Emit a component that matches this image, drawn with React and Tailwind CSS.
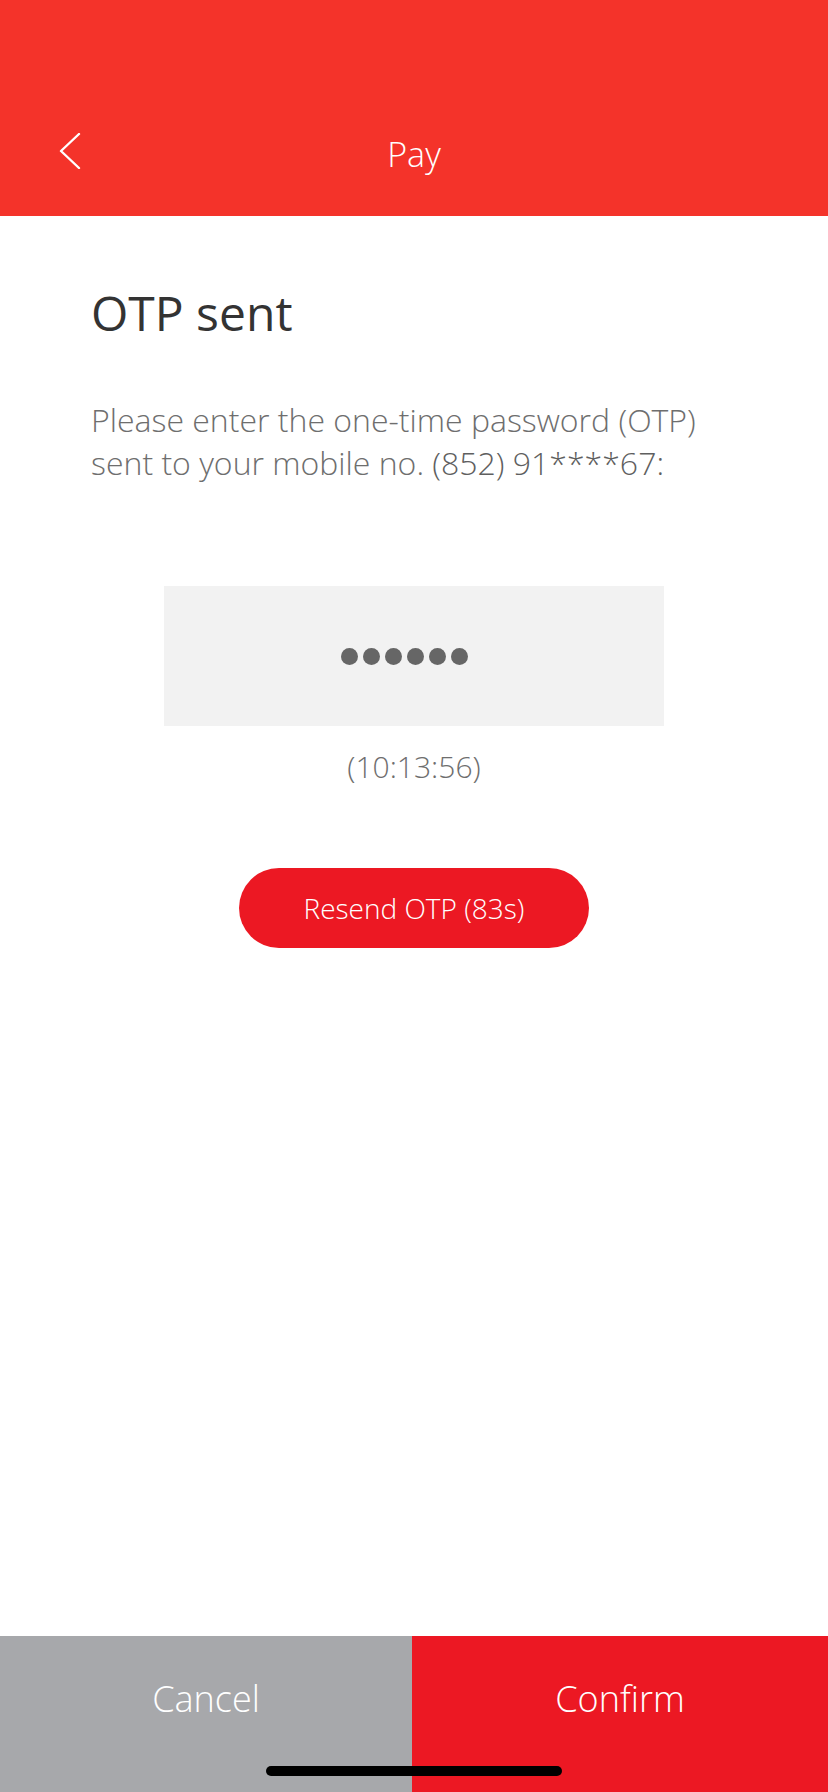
import React from "react";

export default function App() {
  return (
    <div className="relative flex h-[1792px] w-[828px] flex-col overflow-hidden bg-white font-['Open_Sans','Liberation_Sans',sans-serif]">
      {/* Header */}
      <header className="relative h-[216px] shrink-0 bg-[#F4332A] pt-[131px]">
        <svg
          className="absolute left-[59px] top-[133px]"
          width="22"
          height="36"
          viewBox="0 0 22 36"
          fill="none"
        >
          <polyline
            points="20,1 2,18 20,35"
            stroke="white"
            strokeWidth="2.4"
            strokeLinecap="round"
            strokeLinejoin="round"
          />
        </svg>
        <h1 className="text-center text-[34px] font-light leading-[46px] text-white">Pay</h1>
      </header>

      {/* Content */}
      <main className="flex flex-1 flex-col px-[91px]">
        <h2 className="mt-[64px] text-[48px] font-normal leading-[65px] text-[#333333]">OTP sent</h2>
        <p className="mt-[53px] whitespace-nowrap text-[32px] font-light leading-[43px] text-[#6e6e6e]">
          Please enter the one-time password (OTP)
          <br />
          sent to your mobile no. <span className="font-[350] text-[#5f5f5f]">(852) 91****67:</span>
        </p>

        <div className="mx-auto mt-[102px] flex h-[140px] w-[500px] items-center justify-center gap-[5px] bg-[#F2F2F2] pr-[20px]">
          <span className="h-[17px] w-[17px] rounded-full bg-[#666666]" />
          <span className="h-[17px] w-[17px] rounded-full bg-[#666666]" />
          <span className="h-[17px] w-[17px] rounded-full bg-[#666666]" />
          <span className="h-[17px] w-[17px] rounded-full bg-[#666666]" />
          <span className="h-[17px] w-[17px] rounded-full bg-[#666666]" />
          <span className="h-[17px] w-[17px] rounded-full bg-[#666666]" />
        </div>

        <div className="mt-[20px] text-center text-[30px] font-light leading-[42px] text-[#6e6e6e]">(10:13:56)</div>

        <button className="mx-auto mt-[80px] flex h-[80px] w-[350px] items-center justify-center rounded-full bg-[#EC1823] text-[28px] font-light text-white">
          Resend OTP (83s)
        </button>
      </main>

      {/* Footer */}
      <footer className="flex h-[156px] shrink-0">
        <div className="w-[412px] bg-[#A7A8AB] pt-[38px] text-center text-[36px] font-light leading-[49px] text-white">
          Cancel
        </div>
        <div className="flex-1 bg-[#EC1823] pt-[38px] text-center text-[36px] font-light leading-[49px] text-white">
          Confirm
        </div>
      </footer>

      {/* Home indicator */}
      <div className="absolute bottom-[16px] left-[266px] h-[10px] w-[296px] rounded-full bg-black" />
    </div>
  );
}
